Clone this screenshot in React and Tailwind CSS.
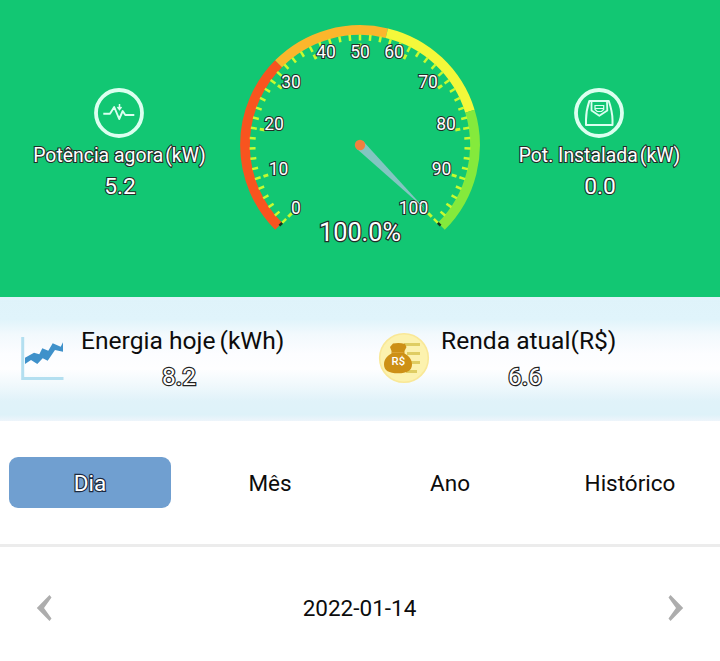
const OUTLINE = "text-white [-webkit-text-stroke:2.2px_#222e29] [paint-order:stroke_fill]";

function point(r, value) {
  const a = ((135 + value * 2.7) * Math.PI) / 180;
  return [360 + r * Math.cos(a), 145 + r * Math.sin(a)];
}

function arc(from, to, r) {
  const [x1, y1] = point(r, from);
  const [x2, y2] = point(r, to);
  return `M${x1} ${y1}A${r} ${r} 0 0 1 ${x2} ${y2}`;
}

function dash(r1, r2, value) {
  const [x1, y1] = point(r1, value);
  const [x2, y2] = point(r2, value);
  return `M${x1} ${y1}L${x2} ${y2}`;
}

const BANDS = [
  [0, 33.3, "#f8541f"],
  [33.3, 55, "#fbb62c"],
  [55, 77, "#f4f83a"],
  [77, 100, "#84ea3c"],
];

const LABELS = [
  [0, 296, 213.5], [10, 278.5, 174.5], [20, 274, 129.5], [30, 291, 88], [40, 326, 58],
  [50, 360, 58], [60, 394, 58], [70, 428, 88], [80, 446, 129.5], [90, 441.5, 174.5], [100, 413.5, 213.5],
];

function Gauge() {
  const ticks = Array.from({ length: 51 }, (_, i) => i * 2);
  return (
    <svg viewBox="240 0 240 260" className="h-[260px] w-[240px]">
      {BANDS.map(([from, to, color]) => (
        <path key={color} d={arc(from, to, 115)} fill="none" stroke={color} strokeWidth="9.8" />
      ))}
      {ticks.map((v) => (
        <path key={v} d={dash(104.5, 110.5, v)} stroke="#c8fb30" strokeWidth="2.5" />
      ))}
      {LABELS.map(([v]) => (
        <path key={v} d={dash(96.5, 101.5, v)} stroke="#c4fa30" strokeWidth="3" />
      ))}
      <path d={dash(110, 114, 0)} stroke="#16351d" strokeWidth="2.4" />
      <path d={dash(110, 114, 100)} stroke="#16351d" strokeWidth="2.4" />
      {LABELS.map(([v, x, y]) => (
        <text key={v} x={x} y={y} textAnchor="middle" fontSize="17.5" fill="#fff" stroke="#222e29" strokeWidth="2.1" paintOrder="stroke">
          {v}
        </text>
      ))}
      <path d="M363 141L425 209L357 149Z" fill="#8cc6c8" fillOpacity="0.92" />
      <circle cx="360" cy="145" r="5.2" fill="#f0803f" />
      <text x="360" y="240.5" textAnchor="middle" fontSize="25.3" fill="#fff" stroke="#222e29" strokeWidth="2.5" paintOrder="stroke">
        100.0%
      </text>
    </svg>
  );
}

function PulseIcon() {
  return (
    <svg viewBox="0 0 50 50" className="-ml-[2px] size-[50px]" fill="none" stroke="#dcfff0">
      <circle cx="25" cy="25" r="23" strokeWidth="3.8" />
      <path d="M9.300 25.800H16l4.200-6.800 5 12 3.500-8 2.600 4h9" strokeWidth="1.900" strokeLinejoin="round" />
      <path d="M25.500 16v4.500m-2-1.500 2 2.500 2-2.500" strokeWidth="1.500" />
    </svg>
  );
}

function ScaleIcon() {
  return (
    <svg viewBox="0 0 50 50" className="-ml-[2px] size-[50px]" fill="none" stroke="#dcfff0">
      <circle cx="25" cy="25" r="23" strokeWidth="3.8" />
      <path d="M15.300 13h19.500c2 6 3.700 11 3.700 19v5H12v-5c0-8 1.300-13 3.300-19Z" strokeWidth="2" strokeLinejoin="round" />
      <path d="M17.500 14v8.500l7.800 5.300 8-5.300L33 14" strokeWidth="1.800" strokeLinejoin="round" />
      <path d="M21 17.500h8.700v4L27.500 23.500h-4.300L21 21.500ZM21 20.500h8.700" strokeWidth="1.200" />
    </svg>
  );
}

function GrowthIcon() {
  return (
    <svg viewBox="0 0 46 46" className="size-[46px]" fill="none">
      <path d="M2.700 2v41.500H43.500" stroke="#b3dff0" strokeWidth="3" />
      <path d="M5 22.700 14 17.700l5.300 1.600 3-6 6 2.400 4.400-7.400 8 3.400 2.300-4.400v9.400L35 15l-7.300 10.700-5-2.400-5.400 5.700L11 25l-6 4Z" fill="#3f91ca" />
    </svg>
  );
}

function MoneyIcon() {
  return (
    <svg viewBox="0 0 52 52" className="size-[52px]">
      <circle cx="26" cy="26" r="24.300" fill="#fcf2ae" stroke="#f9e897" strokeWidth="1.600" />
      <path d="M26 12.500h16M29 21.500h13M30 30.500h12M28 39.500h11" stroke="#dfcd62" strokeWidth="3" />
      <path d="M15 11.500c4-.8 8-.8 12 .5l1.500 3-2 4v2.500c4.500 2.500 7.500 6 7.500 11 0 6-5 8.800-14 8.800S6 38.500 6 32.500c0-5 3-8.500 7.500-11V19l-1.500-4Z" fill="#cd9016" />
      <path d="M14 20.500h11.500" stroke="#dda63a" strokeWidth="0.800" />
      <text x="20.300" y="33.300" textAnchor="middle" fontSize="11.300" fontWeight="500" fill="#fff">R$</text>
    </svg>
  );
}

function Chevron({ flip }) {
  return (
    <svg viewBox="0 0 16 28" className={flip ? "h-[28px] w-[16px] -scale-x-100" : "h-[28px] w-[16px]"}>
      <path d="M13.500 1 .800 14l12.700 13 2-2.500L8 14l7.500-10.500Z" fill="#adadad" />
    </svg>
  );
}

function Stat({ icon, label, unit, value }) {
  return (
    <div className="flex w-[240px] flex-col items-center pt-[88px]">
      {icon}
      <div className={`-ml-[1px] mt-[4px] flex h-[28px] items-center gap-[2px] text-[19.400px] whitespace-nowrap ${OUTLINE}`}>
        <span>{label}</span>
        <span>{unit}</span>
      </div>
      <div className={`mt-[3px] flex h-[28px] items-center text-[22.800px] ${OUTLINE}`}>{value}</div>
    </div>
  );
}

export default function App() {
  return (
    <main className="h-[661px] w-[720px] overflow-hidden bg-white font-['Roboto',sans-serif] text-[#0c0c0c]">
      <section className="flex h-[297px] bg-[#12c773]">
        <Stat icon={<PulseIcon />} label="Potência agora" unit="(kW)" value="5.2" />
        <Gauge />
        <Stat icon={<ScaleIcon />} label="Pot. Instalada" unit="(kW)" value="0.0" />
      </section>

      <section className="flex h-[124px] bg-[linear-gradient(to_bottom,#dff3fa_0%,#e0f4fb_18%,#f2f9fd_30%,#fcfdff_46%,#fefeff_58%,#eff8fc_72%,#e0f2f9_84%,#def2f9_95%,#eef5fb_100%)]">
        <div className="flex w-[360px] pt-[29px] pl-[20px]">
          <div className="w-[61px] pt-[9px]"><GrowthIcon /></div>
          <div className="flex flex-col">
            <div className="flex h-[30px] items-center gap-[4px] text-[24.600px] whitespace-nowrap">
              <span>Energia hoje</span>
              <span>(kWh)</span>
            </div>
            <div className="mt-[6px] h-[30px] w-[196px] text-center text-[24.500px] leading-[30px] text-white [-webkit-text-stroke:2.400px_#222] [paint-order:stroke_fill]">8.2</div>
          </div>
        </div>
        <div className="flex w-[360px] pt-[29px] pl-[18px]">
          <div className="w-[63px] pt-[6px]"><MoneyIcon /></div>
          <div className="flex flex-col">
            <div className="flex h-[30px] items-center text-[24.600px] whitespace-nowrap">Renda atual(R$)</div>
            <div className="mt-[6px] h-[30px] w-[168px] text-center text-[24.500px] leading-[30px] text-white [-webkit-text-stroke:2.400px_#222] [paint-order:stroke_fill]">6.6</div>
          </div>
        </div>
      </section>

      <nav className="grid h-[126px] grid-cols-4 items-center border-b-[3px] border-[#ececec] text-[22.500px]">
        <button className="mx-[9px] -mt-[1px] h-[51px] rounded-[9px] bg-[#709fd0] pt-[4px] text-white [-webkit-text-stroke:2.400px_#1c2a40] [paint-order:stroke_fill]">Dia</button>
        <button className="h-[50px] pt-[2px]">Mês</button>
        <button className="h-[50px] pt-[2px]">Ano</button>
        <button className="h-[50px] pt-[2px]">Histórico</button>
      </nav>

      <section className="flex h-[122px] items-center justify-between px-[36px] text-[22.500px]">
        <Chevron />
        <span className="-ml-[1px] pt-[2px]">2022-01-14</span>
        <Chevron flip />
      </section>
    </main>
  );
}
